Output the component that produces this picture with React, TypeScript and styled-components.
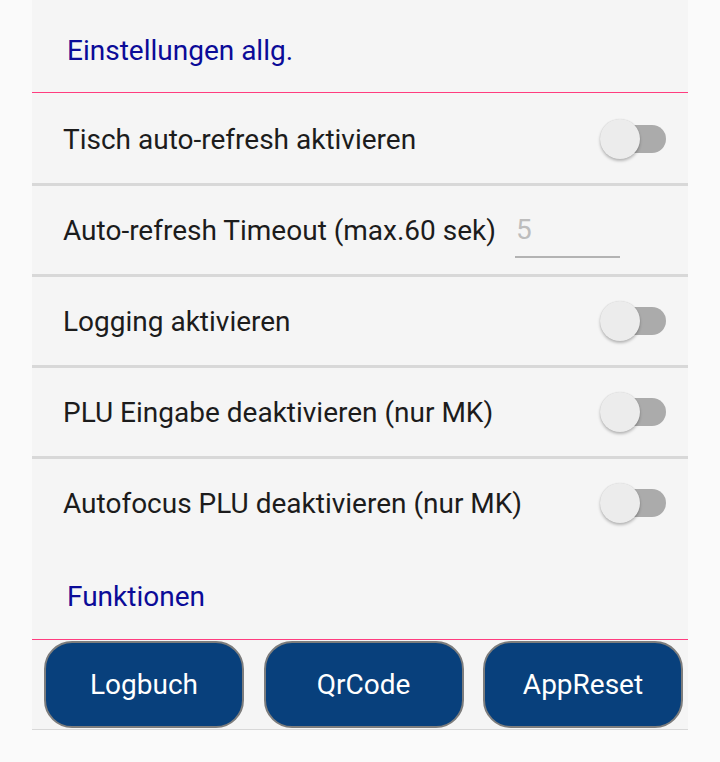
import React, { useState } from "react";
import { styled, createGlobalStyle } from "styled-components";

const GlobalStyle = createGlobalStyle`
  html, body {
    margin: 0;
    padding: 0;
    background: #fafafa;
    font-family: Roboto, "Noto Sans", Arial, sans-serif;
  }
`;

interface SettingRow {
  label: string;
  kind: "switch" | "input";
  value?: string;
}

const settings: SettingRow[] = [
  { label: "Tisch auto-refresh aktivieren", kind: "switch" },
  { label: "Auto-refresh Timeout (max.60 sek)", kind: "input", value: "5" },
  { label: "Logging aktivieren", kind: "switch" },
  { label: "PLU Eingabe deaktivieren (nur MK)", kind: "switch" },
  { label: "Autofocus PLU deaktivieren (nur MK)", kind: "switch" },
];

const actions = ["Logbuch", "QrCode", "AppReset"];

const App = () => {
  const [toggles, setToggles] = useState<Record<number, boolean>>({});

  return (
    <>
      <GlobalStyle />
      <Page>
        <Panel>
          <SectionHeader $pad={8}>
            <SectionTitle>Einstellungen allg.</SectionTitle>
          </SectionHeader>
          {settings.map((s, i) => (
            <Row
              key={s.label}
              $first={i === 0}
              $last={i === settings.length - 1}
            >
              <RowLabel>{s.label}</RowLabel>
              {s.kind === "switch" ? (
                <Switch
                  $on={!!toggles[i]}
                  onClick={() => setToggles({ ...toggles, [i]: !toggles[i] })}
                >
                  <Track $on={!!toggles[i]} />
                  <Thumb $on={!!toggles[i]} />
                </Switch>
              ) : (
                <TimeoutInput placeholder={s.value} />
              )}
            </Row>
          ))}
          <SectionHeader $pad={6}>
            <SectionTitle>Funktionen</SectionTitle>
          </SectionHeader>
          <ButtonBar>
            {actions.map((a) => (
              <ActionButton key={a}>{a}</ActionButton>
            ))}
          </ButtonBar>
        </Panel>
      </Page>
    </>
  );
};

export default App;

const Page = styled.main`
  width: 720px;
  min-height: 762px;
  display: flex;
  justify-content: center;
  align-items: flex-start;
`;

const Panel = styled.div`
  width: 656px;
  display: flex;
  flex-direction: column;
  background: #f5f5f5;
  border-bottom: 1px solid #d8d8d8;
`;

const SectionHeader = styled.div<{ $pad: number }>`
  height: 93px;
  display: flex;
  align-items: center;
  padding: ${({ $pad }) => `${$pad}px 0 0 35px`};
  box-sizing: border-box;
  border-bottom: 1px solid #ff3d7f;
`;

const SectionTitle = styled.span`
  font-size: 28px;
  color: #0b0b98;
`;

const Row = styled.div<{ $first?: boolean; $last?: boolean }>`
  height: ${({ $first, $last }) => ($first ? 93 : $last ? 88 : 91)}px;
  box-sizing: border-box;
  display: flex;
  align-items: center;
  justify-content: space-between;
  padding: ${({ $first }) => ($first ? "2px" : "0")} 22px 0 31px;
  border-bottom: ${({ $last }) => ($last ? "none" : "3px solid #d8d8d8")};
`;

const RowLabel = styled.span`
  font-size: 28px;
  color: #1c1c1c;
`;

const Switch = styled.div<{ $on: boolean }>`
  position: relative;
  width: 66px;
  height: 40px;
  cursor: pointer;
  flex-shrink: 0;
`;

const Track = styled.div<{ $on: boolean }>`
  position: absolute;
  left: 1px;
  right: 0;
  top: 6px;
  height: 28px;
  border-radius: 14px;
  background: ${({ $on }) => ($on ? "#f48fb1" : "#ababab")};
`;

const Thumb = styled.div<{ $on: boolean }>`
  position: absolute;
  top: 0;
  left: ${({ $on }) => ($on ? "26px" : "0")};
  width: 40px;
  height: 40px;
  border-radius: 50%;
  background: ${({ $on }) => ($on ? "#ff3d7f" : "#ececec")};
  box-shadow: 0 2px 3px rgba(0, 0, 0, 0.25), 0 0 1px rgba(0, 0, 0, 0.15);
`;

const TimeoutInput = styled.input`
  width: 104px;
  margin-right: 46px;
  margin-top: 8px;
  border: none;
  border-bottom: 2px solid #b3b3b3;
  background: transparent;
  font-family: Roboto, "Noto Sans", Arial, sans-serif;
  font-size: 28px;
  padding: 2px 0 10px 1px;
  color: #1a1a1a;
  outline: none;

  &::placeholder {
    color: #bdbdbd;
  }
`;

const ButtonBar = styled.div`
  display: flex;
  justify-content: space-between;
  padding: 1px 5px 0 12px;
  height: 89px;
  box-sizing: border-box;
`;

const ActionButton = styled.button`
  width: 200px;
  height: 87px;
  border-radius: 28px;
  border: 2px solid #7d7d7d;
  background: #08407c;
  color: #ffffff;
  font-family: Roboto, "Noto Sans", Arial, sans-serif;
  font-size: 28px;
  cursor: pointer;
`;
